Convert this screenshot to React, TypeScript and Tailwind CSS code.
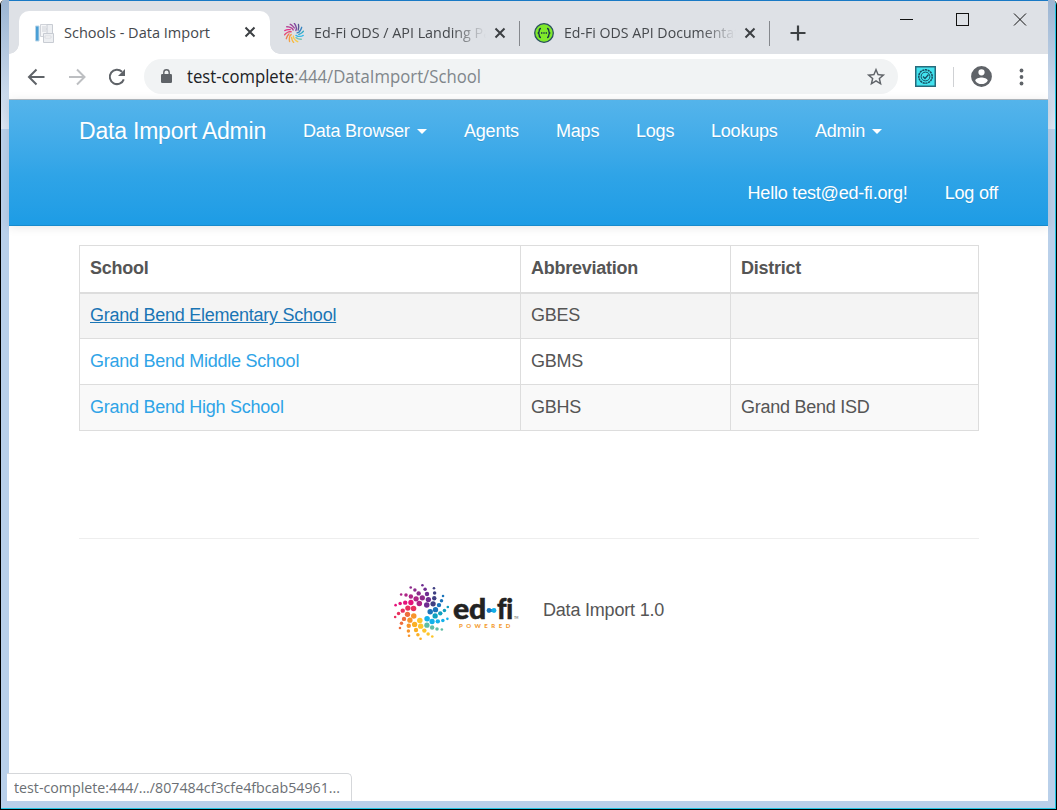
import React from "react";

const ARM_COLORS = [
  "#6f2c91", "#3f3f82", "#1a74bb", "#0fa0bf", "#12b1ea", "#5fbda5", "#fdc52c",
  "#fbb024", "#f7952b", "#ee6d3c", "#e8305f", "#e5127a", "#ae2486", "#8d2a8b",
];
const ARM_DOTS = [
  { r: 26.8, a: 2, s: 1.3 },
  { r: 23, a: 9, s: 1.75 },
  { r: 18.8, a: 17, s: 2.2 },
  { r: 14.2, a: 29, s: 2.65 },
  { r: 8.7, a: 37, s: 2.75 },
];

function polar(arm: number, a: number, r: number) {
  const t = ((-90 + (arm * 360) / 14 + a) * Math.PI) / 180;
  return [Math.cos(t) * r, Math.sin(t) * r];
}

function Pinwheel({ className }: { className?: string }) {
  return (
    <svg className={className} viewBox="-28.5 -29 58 58">
      {ARM_COLORS.map((c, i) =>
        ARM_DOTS.map((d, j) => {
          if (j === 4 && i % 2 === 1) return null;
          const [x, y] = polar(i, d.a, d.r);
          return <circle key={`${i}-${j}`} cx={x} cy={y} r={d.s} fill={c} />;
        })
      )}
    </svg>
  );
}

function PinwheelIcon() {
  return (
    <svg className="h-5 w-5 shrink-0" viewBox="-28 -28 56 56">
      {ARM_COLORS.map((c, i) => (
        <polyline
          key={i}
          points={ARM_DOTS.slice(0, i % 2 ? 4 : 5).map((d) => polar(i, d.a, d.r).join(",")).join(" ")}
          fill="none"
          stroke={c}
          strokeWidth="3.800"
          strokeLinecap="round"
          opacity="0.85"
        />
      ))}
    </svg>
  );
}

function PageIcon() {
  return (
    <svg className="h-5 w-5 shrink-0" viewBox="0 0 20 20">
      <path d="M1.500 3h3.500v15H1.500z" fill="#4a9fd6" stroke="#b9d5e8" />
      <path d="M6.500 1.500h9v12h-9z" fill="#f5f6f8" stroke="#d0d3d9" />
      <path d="M8 4h4M8 6h5M8 8h4" stroke="#cfd2d8" />
      <path d="M13 1.500h5.500v9H13zM9.500 10.500h10v9h-10z" fill="#edeff2" stroke="#c8ccd3" />
      <path d="M11 13h6v2h-6z" fill="#fff" stroke="#d9dbe0" />
    </svg>
  );
}

function BracesIcon() {
  return (
    <svg className="h-5 w-5 shrink-0" viewBox="0 0 20 20">
      <circle cx="10" cy="10" r="9.300" fill="#7fe92b" stroke="#29515f" strokeWidth="1.300" />
      <path d="M7 5.500c-1.500 0-1.700.6-1.700 2 0 1.500 0 2.200-1.500 2.500 1.500.3 1.500 1 1.500 2.500 0 1.400.2 2 1.700 2M13 5.500c1.500 0 1.700.6 1.700 2 0 1.500 0 2.200 1.500 2.500-1.500.3-1.500 1-1.500 2.500 0 1.400-.2 2-1.700 2" fill="none" stroke="#173647" strokeWidth="1.400" />
      <path d="M7 10h6" stroke="#173647" strokeWidth="1.500" strokeDasharray="1.400 .9" />
    </svg>
  );
}

function TabClose() {
  return (
    <svg className="h-3 w-3 shrink-0" viewBox="0 0 12 12">
      <path d="M1.500 1.500l9 9M10.500 1.500l-9 9" stroke="#3c4043" strokeWidth="2" />
    </svg>
  );
}

function Tab({ icon, title, width }: { icon: React.ReactNode; title: string; width: string }) {
  return (
    <div className="flex h-[53px] w-[250px] shrink-0 items-start pt-[22px] pl-[14px]">
      {icon}
      <div className="ml-[10px] h-5 w-[172px] overflow-hidden [mask-image:linear-gradient(to_right,black_80%,transparent)]">
        <svg className="h-5 w-[220px]" aria-label={title}>
          <text y="15" textLength={width} lengthAdjust="spacingAndGlyphs" className="fill-[#45484c] text-[15px]">{title}</text>
        </svg>
      </div>
      <div className="mt-1 ml-[8px]"><TabClose /></div>
      <div className="ml-auto h-[25px] w-px -translate-y-[2px] bg-[#85888d]" />
    </div>
  );
}

function BrowserTabs() {
  return (
    <div className="flex h-[53px] bg-[#dee1e6]">
      <div className="relative flex h-[43px] w-[251px] shrink-0 self-end rounded-t-[10px] bg-white ml-[10px] pt-[12px] pl-[15px]">
        <div className="absolute bottom-0 -left-[10px] h-[10px] w-[10px] bg-[radial-gradient(circle_at_0_0,#dee1e6_9.5px,white_10px)]" />
        <div className="absolute bottom-0 -right-[10px] h-[10px] w-[10px] bg-[radial-gradient(circle_at_100%_0,#dee1e6_9.5px,white_10px)]" />
        <PageIcon />
        <svg className="ml-[10px] h-5 w-[150px]">
          <text y="15" textLength="146" lengthAdjust="spacingAndGlyphs" className="fill-[#45484c] text-[15px]">Schools - Data Import</text>
        </svg>
        <div className="mt-[3px] ml-[30px]"><TabClose /></div>
      </div>
      <Tab icon={<PinwheelIcon />} title="Ed-Fi ODS / API Landing Page" width="193" />
      <Tab icon={<BracesIcon />} title="Ed-Fi ODS API Documentation" width="196" />
      <svg className="mt-[24px] ml-[20px] h-4 w-4 shrink-0" viewBox="0 0 16 16">
        <path d="M8 .500v15M.500 8h15" stroke="#3c4043" strokeWidth="2.200" />
      </svg>
      <svg className="mt-[11px] ml-[93px] h-[16px] w-[130px] shrink-0" viewBox="0 0 130 16" fill="none" stroke="#111" shapeRendering="crispEdges">
        <path d="M1 7.500h13M57.500 1.500h12v12h-12z" />
        <path d="M115 1.500l12 12M127 1.500l-12 12" shapeRendering="auto" />
      </svg>
    </div>
  );
}

function Toolbar() {
  return (
    <div className="flex h-[46px] shrink-0 items-center border-b border-[#b5bcc2] bg-white">
      <svg className="ml-[18px] h-[20px] w-[100px] shrink-0" viewBox="0 0 100 20" fill="none" strokeWidth="2">
        <path d="M17.500 10H2.500M9.500 2.500L2 10l7.500 7.500" stroke="#5f6368" />
        <path d="M42 10h15M50 2.500l7.500 7.500-7.500 7.500" stroke="#bdbfc2" />
        <path d="M95 4.700A7.200 7.200 0 1 0 96.800 12.300" stroke="#5f6368" />
        <path d="M98 2v7h-7z" fill="#5f6368" />
      </svg>
      <div className="ml-[17px] flex h-[35px] w-[754px] shrink-0 items-center rounded-full bg-[#f1f3f4]">
        <svg className="ml-[17px] h-[15px] w-[11px]" viewBox="0 0 11 15">
          <rect y="5" width="11" height="9" rx="1.300" fill="#5f6368" />
          <path d="M2.800 6V3.500a2.700 2.700 0 0 1 5.400 0V6" fill="none" stroke="#5f6368" strokeWidth="1.400" />
        </svg>
        <svg className="ml-[15px] h-7 w-[400px] text-[18px]">
          <text y="20" textLength="107" lengthAdjust="spacingAndGlyphs" className="fill-[#202124]">test-complete</text>
          <text x="107" y="20" textLength="187" lengthAdjust="spacingAndGlyphs" className="fill-[#80868b]">:444/DataImport/School</text>
        </svg>
        <svg className="mr-[11px] ml-auto h-[22px] w-[22px]" viewBox="0 0 24 24" fill="#5f6368">
          <path d="M22 9.240l-7.190-.62L12 2 9.190 8.630 2 9.240l5.460 4.730L5.820 21 12 17.270 18.180 21l-1.630-7.030L22 9.240zM12 15.400l-3.760 2.270 1-4.280-3.320-2.880 4.380-.38L12 6.100l1.710 4.040 4.380.38-3.320 2.880 1 4.280L12 15.400z" />
        </svg>
      </div>
      <svg className="ml-[17px] h-[21px] w-[21px] shrink-0" viewBox="0 0 21 21">
        <path d="M.750.750h19.500v19.500H.750z" fill="#43e3ef" stroke="#276b7c" strokeWidth="1.500" />
        <circle cx="10.500" cy="10.500" r="6.700" fill="none" stroke="#174d60" strokeWidth="1.500" strokeDasharray="2.200 .6" />
        <circle cx="10.500" cy="10.500" r="4.400" fill="none" stroke="#174d60" />
        <path d="M8 10.500l2 2 3.500-4" fill="none" stroke="#174d60" strokeWidth="1.300" />
      </svg>
      <div className="ml-[17px] h-5 w-px bg-[#cfd1d4]" />
      <svg className="ml-[15px] h-[25px] w-[25px] shrink-0" viewBox="0 0 24 24" fill="#5f6368">
        <path d="M12 2a10 10 0 1 0 0 20 10 10 0 0 0 0-20zm0 3a3 3 0 1 1 0 6 3 3 0 0 1 0-6zm0 14.200a7.200 7.200 0 0 1-6-3.220c.03-1.990 4-3.080 6-3.080s5.970 1.090 6 3.080a7.200 7.200 0 0 1-6 3.220z" />
      </svg>
      <svg className="ml-[25px] h-[18px] w-[5px] shrink-0" viewBox="0 0 5 18" fill="#5f6368">
        <circle cx="2.500" cy="2.500" r="1.900" /><circle cx="2.500" cy="9" r="1.900" /><circle cx="2.500" cy="15.500" r="1.900" />
      </svg>
    </div>
  );
}

function Caret() {
  return <span className="ml-[7px] inline-block border-x-[5px] border-t-[5px] border-x-transparent border-t-white align-middle" />;
}

function NavBar() {
  return (
    <nav className="h-[126px] border-b border-[#178acc] bg-linear-to-b from-[#54b4eb] via-[#2fa4e7] via-60% to-[#1d9ce5] text-[18px] tracking-[-0.2px] text-white shadow-[0_1px_10px_rgba(0,0,0,0.1)] [text-shadow:0_1px_0_rgba(0,0,0,0.1)]">
      <div className="flex h-[62px] items-center pl-[70px]">
        <span className="w-[224px] text-[23px]">Data Import Admin</span>
        <span className="w-[161px] whitespace-nowrap">Data Browser<Caret /></span>
        <span className="w-[92px]">Agents</span>
        <span className="w-[80px]">Maps</span>
        <span className="w-[75px]">Logs</span>
        <span className="w-[104px]">Lookups</span>
        <span>Admin<Caret /></span>
      </div>
      <div className="flex h-[62px] items-center justify-end gap-[37px] pr-[50px]">
        <span>Hello test@ed-fi.org!</span>
        <span>Log off</span>
      </div>
    </nav>
  );
}

const SCHOOLS = [
  { name: "Grand Bend Elementary School", abbr: "GBES", district: "", row: "bg-[#f4f4f4]", link: "text-[#1a75b5] underline" },
  { name: "Grand Bend Middle School", abbr: "GBMS", district: "", row: "bg-white", link: "text-[#2fa4e7]" },
  { name: "Grand Bend High School", abbr: "GBHS", district: "Grand Bend ISD", row: "bg-[#f9f9f9]", link: "text-[#2fa4e7]" },
];

function SchoolTable() {
  return (
    <table className="mt-[19px] ml-[70px] w-[900px] table-fixed border-collapse border border-[#ddd] text-left text-[18px] leading-[25px] tracking-[-0.25px] text-[#555]">
      <colgroup><col className="w-[441px]" /><col className="w-[210px]" /><col /></colgroup>
      <thead>
        <tr className="h-[47px] border-b-2 border-[#ddd]">
          <th className="border-r border-[#ddd] px-[10px]">School</th>
          <th className="border-r border-[#ddd] px-[10px]">Abbreviation</th>
          <th className="px-[10px]">District</th>
        </tr>
      </thead>
      <tbody>
        {SCHOOLS.map((s) => (
          <tr key={s.abbr} className={`h-[46px] border-b border-[#ddd] ${s.row}`}>
            <td className="border-r border-[#ddd] px-[10px]"><a className={s.link}>{s.name}</a></td>
            <td className="border-r border-[#ddd] px-[10px]">{s.abbr}</td>
            <td className="px-[10px]">{s.district}</td>
          </tr>
        ))}
      </tbody>
    </table>
  );
}

function EdFiLogo() {
  return (
    <div className="flex h-[58px] w-[126px]">
      <Pinwheel className="h-[58px] w-[58px] shrink-0" />
      <svg className="h-[58px] w-[68px] shrink-0 font-[Lato,sans-serif]" viewBox="0 0 68 58">
        <text x="2" y="36" textLength="33" lengthAdjust="spacingAndGlyphs" strokeWidth="0.500" className="fill-[#222] stroke-[#222] text-[28px] font-black">ed</text>
        <text x="46" y="36" textLength="16" lengthAdjust="spacingAndGlyphs" strokeWidth="0.500" className="fill-[#222] stroke-[#222] text-[28px] font-black">fi</text>
        <path d="M38 27.500h5" stroke="#1593d8" strokeWidth="3" />
        <circle cx="38" cy="27.500" r="2.400" fill="#1876bd" /><circle cx="43" cy="27.500" r="2.400" fill="#12aee8" />
        <text x="63" y="36" className="fill-[#444] text-[3px]">TM</text>
        <text x="8" y="45" textLength="51" className="fill-[#f39a2d] text-[6px] font-black">POWERED</text>
      </svg>
    </div>
  );
}

export default function App() {
  return (
    <div className="relative flex h-[810px] w-[1057px] flex-col overflow-hidden rounded-t-[5px] border-x border-b border-black bg-[#b9d0ea] font-['Open_Sans',sans-serif]">
      <div className="flex h-[809px] flex-col border-r border-b border-[#20c4e2] bg-linear-to-b from-[#9bb5d3] via-[#dce7f4] via-[16%] to-[#b9d0ea] to-[16%] pr-[7px] pb-[7px] pl-[8px]">
        <div className="flex min-h-0 flex-1 flex-col bg-white">
          <div className="h-px shrink-0 bg-[#1979c5]" />
          <BrowserTabs />
          <Toolbar />
          <main className="flex-1 font-['Liberation_Sans',sans-serif]">
            <NavBar />
            <SchoolTable />
            <hr className="mt-[107px] ml-[70px] w-[900px] border-[#eee]" />
            <footer className="mt-[44px] ml-[384px] flex items-center gap-[24px] text-[18px] tracking-[-0.2px] text-[#555]">
              <EdFiLogo />
              <span className="pb-[4px]">Data Import 1.0</span>
            </footer>
          </main>
        </div>
      </div>
      <div className="absolute bottom-[8px] left-[6px] h-[28px] w-[345px] rounded-tr-[5px] border-t border-r border-[#d5d7da] bg-white">
        <svg className="ml-[7px] h-[26px] w-[330px]">
          <text y="19" textLength="326" lengthAdjust="spacingAndGlyphs" className="fill-[#6b6f74] text-[15px]">test-complete:444/.../807484cf3cfe4fbcab54961...</text>
        </svg>
      </div>
    </div>
  );
}
